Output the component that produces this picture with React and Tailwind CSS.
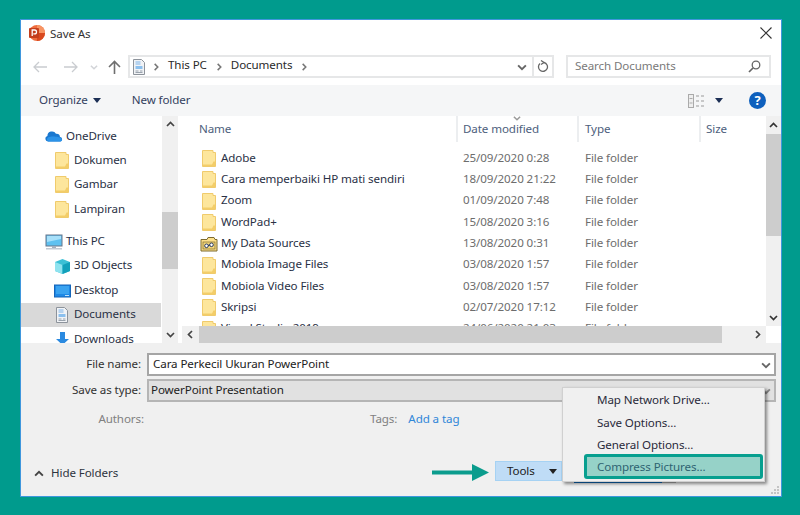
import React from "react";

const Folder = ({ className = "" }) => (
  <svg width="14" height="17" viewBox="0 0 14 17" className={className}>
    <path d="M.5.500h10.500v2H13.500v14H.5z" fill="#fde69c" stroke="#f0cb6c" />
    <path d="M1 14.500h9l1.500-3H13v4.500H1z" fill="#f3cd68" />
  </svg>
);

const DataFolder = () => (
  <svg width="18" height="16" viewBox="0 0 18 16">
    <path d="M1 3.5h6l1-2h6l1 2h2v11.5H1z" fill="#fde08a" stroke="#7d6a2f" />
    <rect x="3" y="6" width="12" height="7" fill="#f6d879" stroke="#7d6a2f" strokeWidth=".7" />
    <circle cx="6.5" cy="9.8" r="1.8" fill="#fff" stroke="#24365f" />
    <circle cx="11.5" cy="8.8" r="1.8" fill="#fff" stroke="#24365f" />
    <path d="M8 9.5l2-.6" stroke="#24365f" />
  </svg>
);

const PptIcon = () => (
  <svg width="18" height="18" viewBox="0 0 18 18">
    <circle cx="9" cy="9" r="8" fill="#ee6c3d" />
    <path d="M9 1a8 8 0 0 1 8 8H9z" fill="#f79564" />
    <path d="M9 17a8 8 0 0 0 8-8H9z" fill="#d9491f" />
    <rect x="1" y="4" width="10" height="10" rx="1" fill="#c43e1c" />
    <path d="M4.2 12V6h2.4a1.9 1.9 0 0 1 0 3.8H5.3" fill="none" stroke="#fff" strokeWidth="1.3" />
  </svg>
);

const OneDrive = () => (
  <svg width="18" height="12" viewBox="0 0 18 12">
    <path d="M3 11.5a2.8 2.8 0 0 1-.6-5.5 4.6 4.6 0 0 1 8.6-2.2A3.6 3.6 0 0 1 15 7a2.3 2.3 0 0 1 .4 4.5z" fill="#1a78d0" />
    <path d="M3 11.5a2.6 2.6 0 0 1 .3-4.3c2-1 7-1 9.5-.2 2 .6 3.5.6 4.2 2.2.4 1-.3 2.3-1.6 2.3z" fill="#2c93e8" />
  </svg>
);

const Monitor = () => (
  <svg width="18" height="16" viewBox="0 0 18 16">
    <rect x="1" y="1" width="16" height="11" fill="#5fc1f0" stroke="#66748a" />
    <path d="M2 2h14v3L2 8z" fill="#a7e0fa" />
    <rect x="7" y="12" width="4" height="2" fill="#a5afbd" />
    <rect x="1" y="14" width="16" height="1.5" fill="#c2c9d3" />
  </svg>
);

const Cube = () => (
  <svg width="17" height="17" viewBox="0 0 17 17">
    <path d="M8.5 1L16 4v9l-7.5 3L1 13V4z" fill="#3cc0d5" />
    <path d="M1 4l7.5 3v9L1 13z" fill="#8fe3ef" />
    <path d="M8.5 7L16 4v9l-7.5 3z" fill="#12a0ba" />
  </svg>
);

const Desktop = () => (
  <svg width="17" height="14" viewBox="0 0 17 14">
    <rect x=".5" y="1" width="16" height="12" fill="#1e88e5" stroke="#1565b8" />
    <rect x="2" y="2" width="13" height="8" fill="#3aa3f0" />
    <rect x="11" y="11" width="4" height="1" fill="#bfe3fb" />
  </svg>
);

const Doc = ({ w = 12, h = 16 }) => (
  <svg width={w} height={h} viewBox="0 0 12 16">
    <path d="M.5.5h8l3 3v12H.5z" fill="#f1f3f6" stroke="#8d939b" />
    <path d="M2.5 3h5M2.5 5h5" stroke="#7cb3e8" />
    <path d="M2.5 7h7v3h-7z" fill="#8cc0ee" />
    <path d="M2.5 12h3M7 12h2.5M2.5 13.5h7" stroke="#9aa3ad" />
  </svg>
);

const Download = () => (
  <svg width="17" height="17" viewBox="0 0 17 17">
    <path d="M6 1h5v7h4l-6.5 6L2 8h4z" fill="#2b8ae0" />
    <rect x="1" y="15" width="15" height="2" fill="#2b8ae0" />
  </svg>
);

const Chevron = ({ dir = "up", stroke = "#444", size = 9 }) => {
  const d = {
    up: "M1 6l3.5-3.5L8 6",
    down: "M1 3l3.5 3.5L8 3",
    left: "M6 1L2.5 4.5 6 8",
    right: "M3 1l3.5 3.5L3 8",
  }[dir];
  return (
    <svg width={size} height={size} viewBox="0 0 9 9">
      <path d={d} fill="none" stroke={stroke} strokeWidth="1.7" />
    </svg>
  );
};

const Caret = ({ fill = "#1c2f55" }) => (
  <svg width="8" height="5" viewBox="0 0 8 5">
    <path d="M0 0h8L4 5z" fill={fill} />
  </svg>
);

const side = [
  ["OneDrive", <OneDrive />, 0, false],
  ["Dokumen", <Folder />, 1, false],
  ["Gambar", <Folder />, 1, false],
  ["Lampiran", <Folder />, 1, false],
  ["", null, 0, false],
  ["This PC", <Monitor />, 0, false],
  ["3D Objects", <Cube />, 1, false],
  ["Desktop", <Desktop />, 1, false],
  ["Documents", <Doc />, 1, true],
  ["Downloads", <Download />, 1, false],
];

const files = [
  ["Adobe", "25/09/2020 0:28"],
  ["Cara memperbaiki HP mati sendiri", "18/09/2020 21:22"],
  ["Zoom", "01/09/2020 7:48"],
  ["WordPad+", "15/08/2020 3:16"],
  ["My Data Sources", "13/08/2020 0:31", true],
  ["Mobiola Image Files", "03/08/2020 1:57"],
  ["Mobiola Video Files", "03/08/2020 1:57"],
  ["Skripsi", "02/07/2020 17:12"],
  ["Visual Studio 2019", "24/06/2020 21:03"],
];

export default function App() {
  return (
    <div className="w-[800px] h-[515px] bg-[#009b8d] pt-[19px] pl-[20px] overflow-hidden text-[11.6px] tracking-[-0.1px] leading-none text-[#222b3d] font-['Noto_Sans','Open_Sans',sans-serif]">
      <div className="relative w-[762px] h-[478px] border border-[#3f97dd] bg-[#f0f0f0] flex flex-col">
        {/* title */}
        <div className="h-[35px] shrink-0 bg-white flex items-start pt-[4px] pl-[7px] pr-[9px]">
          <PptIcon />
          <span className="ml-[4px] mt-[4px] text-[#333]">Save As</span>
          <svg width="12" height="12" viewBox="0 0 12 12" className="ml-auto mt-[3px]">
            <path d="M.5.5l11 11M11.5.5l-11 11" stroke="#333" strokeWidth="1.1" />
          </svg>
        </div>
        {/* address */}
        <div className="h-[30px] shrink-0 bg-white flex items-start pl-[12px] pr-[12px]">
          <div className="w-[95px] h-[23px] flex items-center shrink-0">
            <svg width="14" height="12" viewBox="0 0 14 12"><path d="M6 1L1 6l5 5M1 6h13" fill="none" stroke="#c9ccd0" strokeWidth="1.3" /></svg>
            <svg width="14" height="12" viewBox="0 0 14 12" className="ml-[17px]"><path d="M8 1l5 5-5 5M13 6H0" fill="none" stroke="#c9ccd0" strokeWidth="1.3" /></svg>
            <span className="ml-[12px]"><Chevron dir="down" stroke="#d2d4d8" size={8} /></span>
            <svg width="13" height="14" viewBox="0 0 13 14" className="ml-[10px]"><path d="M1 7l5.5-5.5L12 7M6.500 2v12" fill="none" stroke="#6f6f6f" strokeWidth="1.6" /></svg>
          </div>
          <div className="w-[426px] h-[23px] border-2 border-[#e6e7e8] flex items-center shrink-0">
            <span className="ml-[3px] flex"><Doc w={12} h={16} /></span>
            <span className="ml-[7px]"><Chevron dir="right" stroke="#777" size={8} /></span>
            <span className="ml-[8px] mb-[3px] text-[#2a2a2a]">This PC</span>
            <span className="ml-[8px]"><Chevron dir="right" stroke="#777" size={8} /></span>
            <span className="ml-[8px] mb-[3px] text-[#2a2a2a]">Documents</span>
            <span className="ml-[8px]"><Chevron dir="right" stroke="#777" size={8} /></span>
            <span className="ml-auto mr-[5px]"><Chevron dir="down" stroke="#666" size={10} /></span>
            <div className="w-[20px] h-full border-l-2 border-[#e6e7e8] flex items-center justify-center">
              <svg width="12" height="13" viewBox="0 0 12 13"><path d="M3 3.500a4.500 4.500 0 1 0 4-1M4 .5l3 2-3 2" fill="none" stroke="#666" strokeWidth="1.3" /></svg>
            </div>
          </div>
          <div className="ml-[12px] w-[205px] h-[23px] border-2 border-[#e6e7e8] flex items-center pl-[7px] pr-[8px] text-[#7a7a7a] shrink-0">
            <span className="mb-[2px]">Search Documents</span>
            <svg width="13" height="13" viewBox="0 0 13 13" className="ml-auto"><circle cx="8" cy="5" r="3.800" fill="none" stroke="#666" strokeWidth="1.300" /><path d="M5 8l-4 4" stroke="#666" strokeWidth="1.700" /></svg>
          </div>
        </div>
        {/* toolbar */}
        <div className="h-[31px] shrink-0 bg-[#f5f6f7] flex items-center pl-[18px] pr-[15px] text-[#33415e]">
          <span className="mb-[2px]">Organize</span>
          <span className="ml-[5px] flex"><Caret /></span>
          <span className="ml-[31px] mb-[2px]">New folder</span>
          <svg width="17" height="14" viewBox="0 0 17 14" className="ml-auto">
            <rect x=".5" y=".5" width="5" height="13" fill="#eee" stroke="#aaa" />
            <path d="M1.500 4.500h3M1.500 9h3" stroke="#aaa" />
            <path d="M8 2h3M13 2h3M8 7h3M13 7h3M8 12h3M13 12h3" stroke="#999" />
          </svg>
          <span className="ml-[10px] flex"><Caret /></span>
          <span className="ml-[26px] w-[17px] h-[17px] rounded-full bg-[#0e60bd] text-white font-bold text-[13px] flex items-center justify-center">?</span>
        </div>
        {/* panes */}
        <div className="h-[227px] shrink-0 bg-white flex">
          <div className="w-[140px] overflow-hidden shrink-0 pt-[8px]">
            {side.map(([t, icon, indent, sel], i) =>
              t ? (
                <div key={i} className={`h-[24.4px] flex items-center ${indent ? "pl-[32px]" : "pl-[24px]"} ${sel ? "bg-[#d9d9d9]" : ""}`}>
                  <span className="w-[18px] flex justify-center shrink-0 mr-[3px]">{icon}</span>
                  <span className={`text-[#2a3145] ${i === 0 ? "" : "mb-[2px]"}`}>{t}</span>
                </div>
              ) : (
                <div key={i} className="h-[8px]" />
              )
            )}
          </div>
          <div className="w-[16px] ml-[1px] shrink-0 bg-[#f0f0f0] flex flex-col">
            <div className="h-[16px] flex items-center justify-center"><Chevron dir="up" /></div>
            <div className="h-[80px]" />
            <div className="h-[57px] bg-[#cdcdcd]" />
            <div className="flex-1" />
            <div className="h-[18px] flex items-center justify-center"><Chevron dir="down" /></div>
          </div>
          <div className="flex-1 min-w-0 flex flex-col">
            <div className="flex-1 min-h-0 flex">
              <div className="flex-1 min-w-0 flex flex-col">
                <div className="h-[26px] shrink-0 flex text-[#4d607c] relative">
                  <div className="w-[280px] border-r-2 border-[#eceef0] pl-[21px] flex items-center">Name</div>
                  <div className="w-[121px] border-r-2 border-[#eceef0] pl-[5px] flex items-center">Date modified</div>
                  <div className="w-[122px] border-r-2 border-[#eceef0] pl-[6px] flex items-center">Type</div>
                  <div className="pl-[5px] flex items-center">Size</div>
                  <span className="absolute left-[335px] top-[-2px]"><Chevron dir="down" stroke="#9a9a9a" size={8} /></span>
                </div>
                <div className="flex-1 min-h-0 overflow-hidden pt-[6px]">
                  {files.map(([n, d, special], i) => (
                    <div key={i} className="h-[21.3px] flex items-center shrink-0">
                      <div className="w-[280px] flex items-center pl-[22px] shrink-0">
                        <span className="w-[18px] flex justify-center shrink-0">{special ? <DataFolder /> : <Folder />}</span>
                        <span className="ml-[3px] mb-[2px] text-[#2a3145]">{n}</span>
                      </div>
                      <div className="w-[121px] pl-[5px] mb-[2px] text-[#6d6d6d] shrink-0">{d}</div>
                      <div className="pl-[6px] mb-[2px] text-[#6d6d6d]">File folder</div>
                    </div>
                  ))}
                </div>
              </div>
              <div className="w-[15px] shrink-0 bg-[#f0f0f0] flex flex-col">
                <div className="h-[18px] flex items-center justify-center"><Chevron dir="up" stroke="#333" /></div>
                <div className="h-[102px] bg-[#cdcdcd]" />
                <div className="flex-1" />
                <div className="h-[18px] flex items-center justify-center"><Chevron dir="down" stroke="#333" /></div>
              </div>
            </div>
            <div className="h-[17px] shrink-0 flex">
              <div className="w-[4px] bg-white" />
              <div className="flex-1 bg-[#f0f0f0] flex">
                <div className="w-[17px] flex items-center justify-center"><Chevron dir="left" /></div>
                <div className="w-[523px] bg-[#cdcdcd]" />
                <div className="flex-1 flex items-center justify-end pr-[4px]"><Chevron dir="right" /></div>
              </div>
              <div className="w-[15px] bg-white" />
            </div>
          </div>
        </div>
        {/* form */}
        <div className="flex-1 flex flex-col min-h-0 text-[#222]">
          <div className="flex items-center h-[23px] mt-[10px]">
            <span className="w-[120px] mb-[2px] text-right text-[#333]">File name:</span>
            <div className="ml-[6px] w-[629px] h-[23px] bg-white border-2 border-[#a5a5a5] flex items-center pl-[4px] pr-[3px]">
              <span className="mb-[2px]">Cara Perkecil Ukuran PowerPoint</span>
              <span className="ml-auto"><Chevron dir="down" stroke="#666" size={10} /></span>
            </div>
          </div>
          <div className="flex items-center h-[23px] mt-[3px]">
            <span className="w-[120px] mb-[2px] text-right text-[#333]">Save as type:</span>
            <div className="ml-[6px] w-[629px] h-[23px] bg-[#e1e1e1] border-2 border-[#b5b5b5] flex items-center pl-[2px] pr-[3px]">
              <span className="mb-[2px]">PowerPoint Presentation</span>
              <span className="ml-auto"><Chevron dir="down" stroke="#888" size={10} /></span>
            </div>
          </div>
          <div className="flex items-center mt-[8px] h-[18px] text-[#808080]">
            <span className="w-[123px] text-right">Authors:</span>
            <span className="ml-[226px]">Tags:</span>
            <span className="ml-[11px] text-[#2f86d8]">Add a tag</span>
          </div>
          <div className="flex items-center h-[20px] mt-[33px] pl-[13px] pr-[219px]">
            <div className="flex items-center mt-[6px]">
              <Chevron dir="up" stroke="#444" size={10} />
              <span className="ml-[7px] mb-[2px] text-[#2e3440]">Hide Folders</span>
            </div>
            <svg width="58" height="17" viewBox="0 0 58 17" className="ml-auto mt-[2px]">
              <path d="M0 6.500h40V0l17 8.500L40 17v-6.500H0z" fill="#0b9c8d" />
            </svg>
            <div className="ml-[5px] w-[67px] h-[20px] bg-[#bfdcf6] border border-[#a6d2f3] flex items-center pl-[11px]">
              Tools
              <span className="ml-[14px] flex"><Caret fill="#222" /></span>
            </div>
          </div>
        </div>
        {/* resize grip */}
        <svg width="10" height="10" viewBox="0 0 10 10" className="absolute right-[1px] bottom-[1px]">
          <path d="M7 1h2v2H7zM4 4h2v2H4zM7 4h2v2H7zM1 7h2v2H1zM4 7h2v2H4zM7 7h2v2H7z" fill="#c4c4c4" />
        </svg>
        {/* save button peek */}
        <div className="absolute left-[553px] top-[461px] w-[88px] h-[2px] bg-[#0f6cbd]" />
        <div className="absolute left-[641px] top-[461px] w-[14px] h-[2px] bg-[#b0b0b0]" />
        {/* menu */}
        <div className="absolute left-[541px] top-[367px] w-[203px] h-[95px] bg-[#f0f0f0] border border-[#d0d0d0] shadow-[2px_2px_3px_rgba(0,0,0,0.45)] pt-[2px] text-[#2a2a3a]">
          <div className="h-[22.3px] flex items-center pl-[34px] pb-[2px]">Map Network Drive...</div>
          <div className="h-[22.3px] flex items-center pl-[34px] pb-[2px]">Save Options...</div>
          <div className="h-[22.3px] flex items-center pl-[34px] pb-[2px]">General Options...</div>
          <div className="ml-[21px] -mt-[3px] w-[179px] h-[25px] bg-[#96d2c8] border-[3px] border-[#079f8f] rounded-[3px] flex items-center pl-[10px] text-[#2f6472]">Compress Pictures...</div>
        </div>
      </div>
    </div>
  );
}
